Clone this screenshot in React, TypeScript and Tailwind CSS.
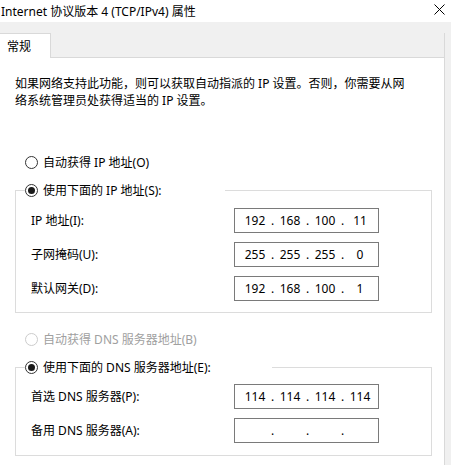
import React from 'react';

type IpRow = { label: string; value: string[] };

const ipRows: IpRow[] = [
  { label: 'IP 地址(I):', value: ['192', '168', '100', '11'] },
  { label: '子网掩码(U):', value: ['255', '255', '255', '0'] },
  { label: '默认网关(D):', value: ['192', '168', '100', '1'] },
];

const dnsRows: IpRow[] = [
  { label: '首选 DNS 服务器(P):', value: ['114', '114', '114', '114'] },
  { label: '备用 DNS 服务器(A):', value: ['', '', '', ''] },
];

function Radio({ checked, disabled }: { checked?: boolean; disabled?: boolean }) {
  return (
    <span
      className={`flex h-[13px] w-[13px] shrink-0 items-center justify-center rounded-full border bg-white ${
        disabled ? 'border-[#cccccc]' : 'border-[#333333]'
      }`}
    >
      {checked && <span className="h-[7px] w-[7px] rounded-full bg-[#1a1a1a]" />}
    </span>
  );
}

function RadioLabel({ text, checked, disabled }: { text: string; checked?: boolean; disabled?: boolean }) {
  return (
    <div className={`flex h-[17px] items-center gap-[5px] ${disabled ? 'text-[#a0a0a0]' : 'text-black'}`}>
      <Radio checked={checked} disabled={disabled} />
      <span>{text}</span>
    </div>
  );
}

function IpBox({ value }: { value: string[] }) {
  return (
    <div className="flex h-[25px] w-[145px] items-center border border-[#7a7a7a] bg-white pl-[5px]">
      {value.map((v, i) => (
        <React.Fragment key={i}>
          {i > 0 && <span className="w-[5px] text-center">.</span>}
          <span className="w-[30px] text-center">{v}</span>
        </React.Fragment>
      ))}
    </div>
  );
}

function IpRows({ rows }: { rows: IpRow[] }) {
  return (
    <div className="flex flex-col gap-[9px] pl-[6px]">
      {rows.map((r) => (
        <div key={r.label} className="flex items-center">
          <span className="w-[203px]">{r.label}</span>
          <IpBox value={r.value} />
        </div>
      ))}
    </div>
  );
}

export default function App() {
  return (
    <div className="h-[465px] w-[451px] overflow-hidden bg-[#f0f0f0] font-['Noto_Sans','Noto_Sans_CJK_SC',sans-serif] text-[12px] leading-[17px] text-black">
      {/* title bar */}
      <div className="flex h-[22px] items-center justify-between bg-white pl-[1px] pr-[6px]">
        <span>Internet 协议版本 4 (TCP/IPv4) 属性</span>
        <svg width="11" height="11" viewBox="0 0 11 11" className="mt-[-4px]">
          <path d="M0.5 0.5 L10.5 10.5 M10.5 0.5 L0.5 10.5" stroke="#000" strokeWidth="1" fill="none" />
        </svg>
      </div>

      {/* tabs */}
      <div className="mt-[11px] flex h-[25px] w-[445px]">
        <div className="flex h-[25px] w-[51px] items-center border-r border-t border-[#d9d9d9] bg-white pl-[7px]">
          常规
        </div>
        <div className="flex-1 border-b border-r border-[#d9d9d9]" />
      </div>

      {/* panel */}
      <div className="h-[420px] w-[445px] border-r border-[#d9d9d9] bg-white pl-[15px] pt-[17px]">
        <p>
          如果网络支持此功能，则可以获取自动指派的 IP 设置。否则，你需要从网
          <br />
          络系统管理员处获得适当的 IP 设置。
        </p>

        <div className="mt-[45px] pl-[10px]">
          <RadioLabel text="自动获得 IP 地址(O)" />
        </div>

        <fieldset className="mt-[11px] w-[417px] border border-[#dcdcdc] pb-[11px] pl-[9px]">
          <legend className="w-[200px]">
            <RadioLabel text="使用下面的 IP 地址(S):" checked />
          </legend>
          <div className="mt-[9px]">
            <IpRows rows={ipRows} />
          </div>
        </fieldset>

        <div className="mt-[18px] pl-[10px]">
          <RadioLabel text="自动获得 DNS 服务器地址(B)" disabled />
        </div>

        <fieldset className="mt-[11px] w-[417px] border border-[#dcdcdc] pb-[12px] pl-[9px]">
          <legend className="w-[247px]">
            <RadioLabel text="使用下面的 DNS 服务器地址(E):" checked />
          </legend>
          <div className="mt-[8px]">
            <IpRows rows={dnsRows} />
          </div>
        </fieldset>
      </div>
    </div>
  );
}
